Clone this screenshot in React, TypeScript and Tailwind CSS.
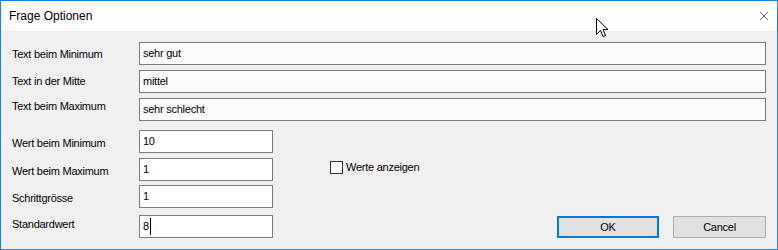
import { X } from 'lucide-react';

const font = { fontFamily: '"Liberation Sans", Arial, sans-serif' };

const TextRow = ({ label, value, mt, labelOffset }: { label: string; value: string; mt: string; labelOffset: string }) => (
  <div className={`flex items-start ${mt}`}>
    <div className={`w-[127px] ${labelOffset}`}>{label}</div>
    <div className="w-[627px] h-[23px] border border-[#7a7a7a] bg-[#fbfbfd] pl-[3px] flex items-center">{value}</div>
  </div>
);

const NumberField = ({ value, caret }: { value: string; caret?: boolean }) => (
  <div className="w-[134px] h-[23px] border border-[#7a7a7a] bg-white pl-[3px] flex items-center">
    {value}
    {caret && <span className="inline-block w-px h-[17px] bg-black ml-px" />}
  </div>
);

const App = () => {
  return (
    <div
      className="relative w-[778px] h-[250px] border border-[#1883d7] bg-[#f0f0f0] flex flex-col text-[11px] text-black tracking-[-0.25px]"
      style={font}
    >
      {/* title bar */}
      <div className="h-[30px] bg-white flex items-center justify-between pl-[8px] pr-[6px]">
        <span className="text-[12px] tracking-normal">Frage Optionen</span>
        <X size={14} strokeWidth={1.1} className="text-black" />
      </div>

      {/* body */}
      <div className="flex-1 pl-[11px] pt-[11px] flex flex-col">
        <TextRow label="Text beim Minimum" value="sehr gut" mt="" labelOffset="mt-[4px]" />
        <TextRow label="Text in der Mitte" value="mittel" mt="mt-[5px]" labelOffset="mt-[3px]" />
        <TextRow label="Text beim Maximum" value="sehr schlecht" mt="mt-[5px]" labelOffset="mt-[0px]" />

        <div className="flex items-start mt-[9px]">
          <div className="w-[127px] mt-[5px]">Wert beim Minimum</div>
          <NumberField value="10" />
        </div>
        <div className="flex items-start mt-[5px]">
          <div className="w-[127px] mt-[5px]">Wert beim Maximum</div>
          <NumberField value="1" />
          <label className="flex items-center gap-[3px] ml-[57px] mt-[1px]">
            <span className="w-[13px] h-[13px] border border-[#333333] bg-white" />
            <span>Werte anzeigen</span>
          </label>
        </div>
        <div className="flex items-start mt-[4px]">
          <div className="w-[127px] mt-[5px]">Schrittgrösse</div>
          <NumberField value="1" />
        </div>
        <div className="flex items-start mt-[7px]">
          <div className="w-[127px] mt-[1px]">Standardwert</div>
          <NumberField value="8" caret />
          <div className="flex gap-[14px] ml-[284px] mt-[1px]">
            <button className="w-[102px] h-[22px] border-2 border-[#0078d7] bg-[#e1e1e1] flex items-center justify-center">
              OK
            </button>
            <button className="w-[93px] h-[22px] border border-[#adadad] bg-[#e1e1e1] flex items-center justify-center">
              Cancel
            </button>
          </div>
        </div>
      </div>

      {/* mouse pointer */}
      <svg className="absolute left-[595px] top-[17px]" width="13" height="21" viewBox="0 0 13 21">
        <path
          d="M0.5 0.5 L0.5 16.5 L4.5 12.5 L7 18.5 L9.5 17.5 L7 11.5 L12 11.5 Z"
          fill="white"
          stroke="black"
          strokeWidth="1"
          strokeLinejoin="miter"
        />
      </svg>
    </div>
  );
};

export default App;
